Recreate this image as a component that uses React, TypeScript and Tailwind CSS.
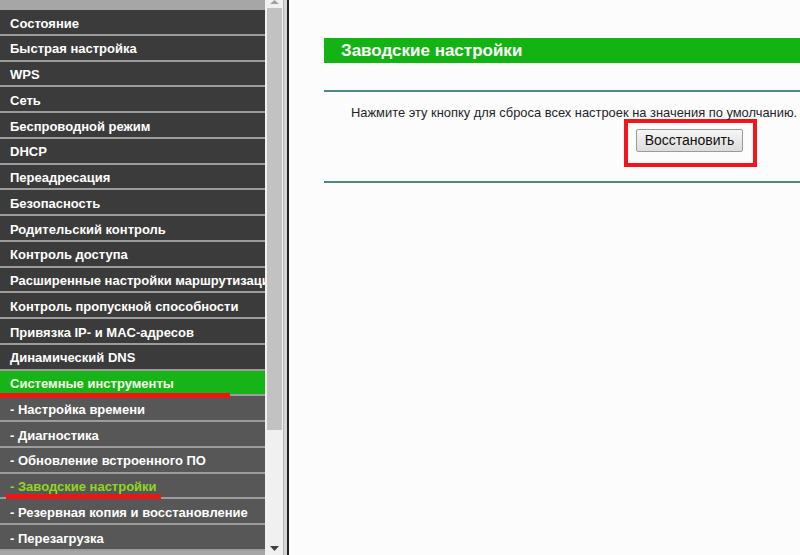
const MENU: { label: string; kind: 'main' | 'active' | 'sub' | 'subActive' }[] = [
  { label: 'Состояние', kind: 'main' },
  { label: 'Быстрая настройка', kind: 'main' },
  { label: 'WPS', kind: 'main' },
  { label: 'Сеть', kind: 'main' },
  { label: 'Беспроводной режим', kind: 'main' },
  { label: 'DHCP', kind: 'main' },
  { label: 'Переадресация', kind: 'main' },
  { label: 'Безопасность', kind: 'main' },
  { label: 'Родительский контроль', kind: 'main' },
  { label: 'Контроль доступа', kind: 'main' },
  { label: 'Расширенные настройки маршрутизации', kind: 'main' },
  { label: 'Контроль пропускной способности', kind: 'main' },
  { label: 'Привязка IP- и MAC-адресов', kind: 'main' },
  { label: 'Динамический DNS', kind: 'main' },
  { label: 'Системные инструменты', kind: 'active' },
  { label: '- Настройка времени', kind: 'sub' },
  { label: '- Диагностика', kind: 'sub' },
  { label: '- Обновление встроенного ПО', kind: 'sub' },
  { label: '- Заводские настройки', kind: 'subActive' },
  { label: '- Резервная копия и восстановление', kind: 'sub' },
  { label: '- Перезагрузка', kind: 'sub' },
];

function rowClass(kind: string) {
  switch (kind) {
    case 'active':    return 'bg-[#17b417] text-[#f4ffe8]';
    case 'sub':       return 'bg-[#575757] text-white';
    case 'subActive': return 'bg-[#575757] text-[#8fd81c]';
    default:          return 'bg-[#3b3b3b] text-white';
  }
}

function Sidebar() {
  return (
    <div className="w-[265px] h-[555px] flex flex-col bg-[#a6a6a6] overflow-hidden shrink-0">
      <div className="h-[10px] shrink-0" />
      {MENU.map(item => (
        <div
          key={item.label}
          className={`relative h-[25.75px] shrink-0 border-b-2 border-[#9c9c9c] pl-[10px] pt-[3px] flex items-center whitespace-nowrap overflow-hidden text-[13px] font-bold ${rowClass(item.kind)}`}
        >
          {item.label}
        </div>
      ))}
    </div>
  );
}

function Scrollbar() {
  return (
    <div className="w-[18px] h-[555px] bg-[#f0f0f0] flex flex-col items-center shrink-0">
      <svg width="9" height="4" viewBox="0 0 9 4" className="shrink-0">
        <path d="M0 4 L4.5 0 L9 4 Z" fill="#a0a0a0" />
      </svg>
      <div className="mt-[4px] w-[15px] h-[422px] bg-[#c2c2c2] shrink-0" />
      <div className="flex-1" />
      <svg width="9" height="5" viewBox="0 0 9 5" className="mb-[4px] shrink-0">
        <path d="M0 0 L9 0 L4.5 5 Z" fill="#404040" />
      </svg>
    </div>
  );
}

function Content() {
  return (
    <div className="flex-1 h-[555px] bg-[#fcfcfc] pl-[35px] pt-[38px] overflow-hidden">
      <div className="h-[25px] bg-[#12b312] flex items-center pl-[17px] text-white text-[17px] font-bold whitespace-nowrap">
        Заводские настройки
      </div>
      <div className="mt-[27px] h-[2px] bg-[#4b8c7c]" />
      <div className="pl-[27px] pt-[13px] text-[12.9px] text-[#1f1f2a] whitespace-nowrap leading-[16px]">
        Нажмите эту кнопку для сброса всех настроек на значения по умолчанию.
      </div>
      <div className="ml-[300px] mt-[-2px] w-[133px] h-[48px] border-4 border-[#f3141e] pl-2 pt-[5px]">
        <button className="w-[107px] h-[23px] rounded-[2px] border border-[#9a9a9a] bg-gradient-to-b from-[#f6f6f6] to-[#dcdcdc] text-[14px] text-[#111] leading-none">
          Восстановить
        </button>
      </div>
      <div className="mt-[14px] h-[2px] bg-[#4b8c7c]" />
    </div>
  );
}

export default function App() {
  return (
    <div className="relative w-[800px] h-[555px] flex overflow-hidden font-['Liberation_Sans',Arial,sans-serif]">
      <Sidebar />
      <Scrollbar />
      <div className="w-[4px] h-[555px] bg-[#d4d4d4] border-l border-[#b8b8b8] shrink-0" />
      <div className="w-[2px] h-[555px] bg-[#202020] shrink-0" />
      <Content />
      {/* red annotation strokes drawn over the menu */}
      <span className="absolute left-0 top-[393px] w-[230px] h-[5px] bg-[#f01515]" />
      <span className="absolute left-[6px] top-[494px] w-[155px] h-[5px] bg-[#f01515]" />
    </div>
  );
}
